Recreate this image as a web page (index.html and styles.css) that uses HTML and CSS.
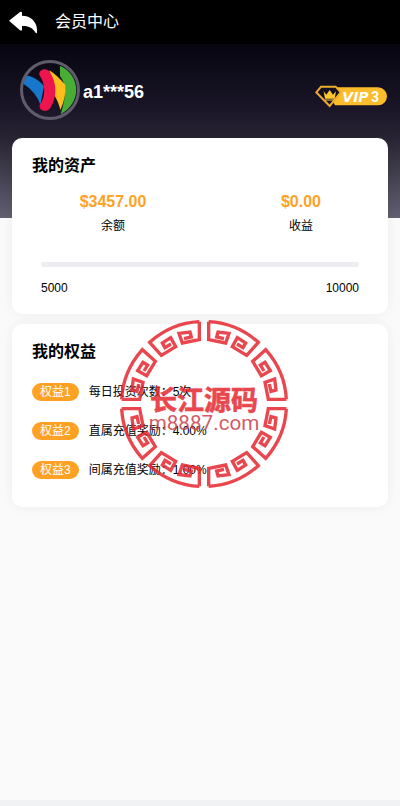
FILE: index.html
```html
<!DOCTYPE html>
<html lang="zh-CN">
<head>
<meta charset="utf-8">
<meta name="viewport" content="width=device-width, initial-scale=1">
<title>会员中心</title>
<link rel="stylesheet" href="styles.css">
</head>
<body>
<header class="topbar">
  <a class="back" href="#" aria-label="返回">
    <svg width="28" height="24" viewBox="0 0 84 72"><path d="M0 32L33 6q6-3 6 3v8C65 17 84 35 84 60v8q-2 4-5-1C71 54 59 47 39 48v11q-1 5-6 2z" fill="#fff"/></svg>
  </a>
  <h1 class="title">会员中心</h1>
</header>
<section class="profile">
  <svg class="avatar" width="60" height="60" viewBox="0 0 180 180" aria-hidden="true">
    <path d="M120 17C180 43 189 126 122 163C137 115 142 75 120 48z" fill="#47ad35"/>
    <path d="M88 31Q112 46 136 75Q139 111 121 150Q117 130 103 105z" fill="#fdbd1c"/>
    <path d="M10 71Q13 44 28 48Q56 57 72 79L61 134Q48 95 10 71z" fill="#1876cb"/>
    <path d="M58 45C55 29 77 21 88 34C111 68 112 112 91 144C78 161 55 150 59 135C78 111 77 72 58 45z" fill="#ee144e"/>
    <circle cx="90" cy="90" r="85.500" fill="none" stroke="#605c6b" stroke-width="9"/>
  </svg>
  <strong class="user">a1***56</strong>
  <svg class="vip" width="72" height="24" viewBox="0 0 216 72" role="img" aria-label="VIP 3">
    <path d="M30 10H189a27 27 0 0 1 0 54H60z" fill="#fcbc2b"/>
    <path d="M18 8H62L77 25 44 66 4 25z" fill="#15101f" stroke="#efac2b" stroke-width="6"/>
    <path d="M26 22l8 10 10-14 10 14 9-10-4 22H30z" fill="#ffc82f"/>
    <path d="M30 48H58" stroke="#f7ce4e" stroke-width="3"/>
    <text class="vip-name" x="82" y="53">VIP</text>
    <text class="vip-level" x="168" y="53">3</text>
  </svg>
</section>
<main class="content">
  <section class="card">
    <h2 class="heading">我的资产</h2>
    <div class="assets">
      <div class="asset"><strong class="amount">$3457.00</strong><span>余额</span></div>
      <div class="asset"><strong class="amount">$0.00</strong><span>收益</span></div>
    </div>
    <div class="progress">
      <div class="track"></div>
      <div class="range"><span>5000</span><span>10000</span></div>
    </div>
  </section>
  <section class="card">
    <h2 class="heading">我的权益</h2>
    <ul class="benefits">
      <li class="benefit"><span class="tag">权益1</span><span>每日投资次数：5次</span></li>
      <li class="benefit"><span class="tag">权益2</span><span>直属充值奖励：4.00%</span></li>
      <li class="benefit"><span class="tag">权益3</span><span>间属充值奖励：1.00%</span></li>
    </ul>
    <svg class="seal" width="170" height="170" viewBox="-255 -255 510 510">
      <defs>
        <g id="key">
          <path d="M-14-247V-193L-65-183-75-212-42-216-38-201-60-196M-14-247Q-98-243-163-185L-128-146-85-172-100-199-125-183-117-169-99-180"/>
        </g>
        <g id="corner">
          <use href="#key"/>
          <use href="#key" transform="matrix(0 1 1 0 0 0)"/>
        </g>
      </defs>
      <g class="seal-line">
        <use href="#corner"/>
        <use href="#corner" transform="scale(-1 1)"/>
        <use href="#corner" transform="scale(1 -1)"/>
        <use href="#corner" transform="scale(-1 -1)"/>
      </g>
      <text class="seal-name" x="0" y="17">长江源码</text>
      <text class="seal-site" x="0" y="77">m8887.com</text>
    </svg>
  </section>
</main>
<footer class="bottom"></footer>
</body>
</html>
```
FILE: styles.css
```css
* { box-sizing: border-box; }
body {
  margin: 0;
  min-height: 100vh;
  display: flex;
  flex-direction: column;
  background: #fafafa;
  color: #000;
  font: 12px/18px "Liberation Sans", "Noto Sans CJK SC", sans-serif;
}
h1, h2, ul { margin: 0; padding: 0; }
.topbar {
  display: flex;
  align-items: center;
  gap: 18px;
  height: 44px;
  padding: 0 9px;
  background: #000;
  color: #fff;
}
.back { display: flex; }
.title { font-size: 16px; line-height: 24px; font-weight: 400; }
.profile {
  display: flex;
  align-items: center;
  height: 174px;
  padding: 0 13px 82px 20px;
  background: linear-gradient(#070510, #191527 36%, #282434 54%, #625f70);
}
.avatar { margin-right: 3px; }
.user { margin-top: 4px; color: #fff; font-size: 18px; line-height: 24px; }
.vip { margin: 12px 0 0 auto; }
.vip-name { fill: #fff; font: italic 700 42px "DejaVu Sans", sans-serif; }
.vip-level { fill: #fff; font: 700 42px Roboto, sans-serif; }
.content {
  flex: 1;
  display: flex;
  flex-direction: column;
  gap: 10px;
  margin-top: -80px;
  padding: 0 12px;
}
.card {
  position: relative;
  padding: 16px 20px 17px;
  border-radius: 10px;
  background: #fff;
  box-shadow: 0 0 12px rgba(0, 0, 0, .06);
}
.heading { font-size: 16px; line-height: 24px; font-weight: 700; }
.assets { display: flex; margin: 12px -20px 0; }
.asset {
  flex: 1;
  display: flex;
  flex-direction: column;
  align-items: center;
  gap: 3px;
  padding-left: 14px;
}
.amount { color: #ffa224; font-size: 16px; line-height: 24px; }
.progress { margin: 27px 9px 0; }
.track { height: 5px; border-radius: 3px; background: #ebedf0; }
.range { display: flex; justify-content: space-between; margin-top: 12px; }
.benefits {
  display: grid;
  gap: 21px;
  margin-top: 19px;
  padding-bottom: 11px;
  list-style: none;
}
.benefit { display: flex; align-items: center; gap: 10px; }
.tag { padding: 0 8px; border-radius: 9px; background: #ffa224; color: #fff; }
.seal { position: absolute; left: 107px; top: -5px; opacity: .85; }
.seal-line { fill: none; stroke: #e62630; stroke-width: 10; }
.seal-name {
  fill: #e62630;
  stroke: #e62630;
  stroke-width: 2;
  font: 700 81px "Noto Sans CJK SC", sans-serif;
  text-anchor: middle;
}
.seal-site { fill: #c9404c; font: 62px Roboto, sans-serif; text-anchor: middle; }
.bottom { height: 6px; background: #f1f2f4; }
```
